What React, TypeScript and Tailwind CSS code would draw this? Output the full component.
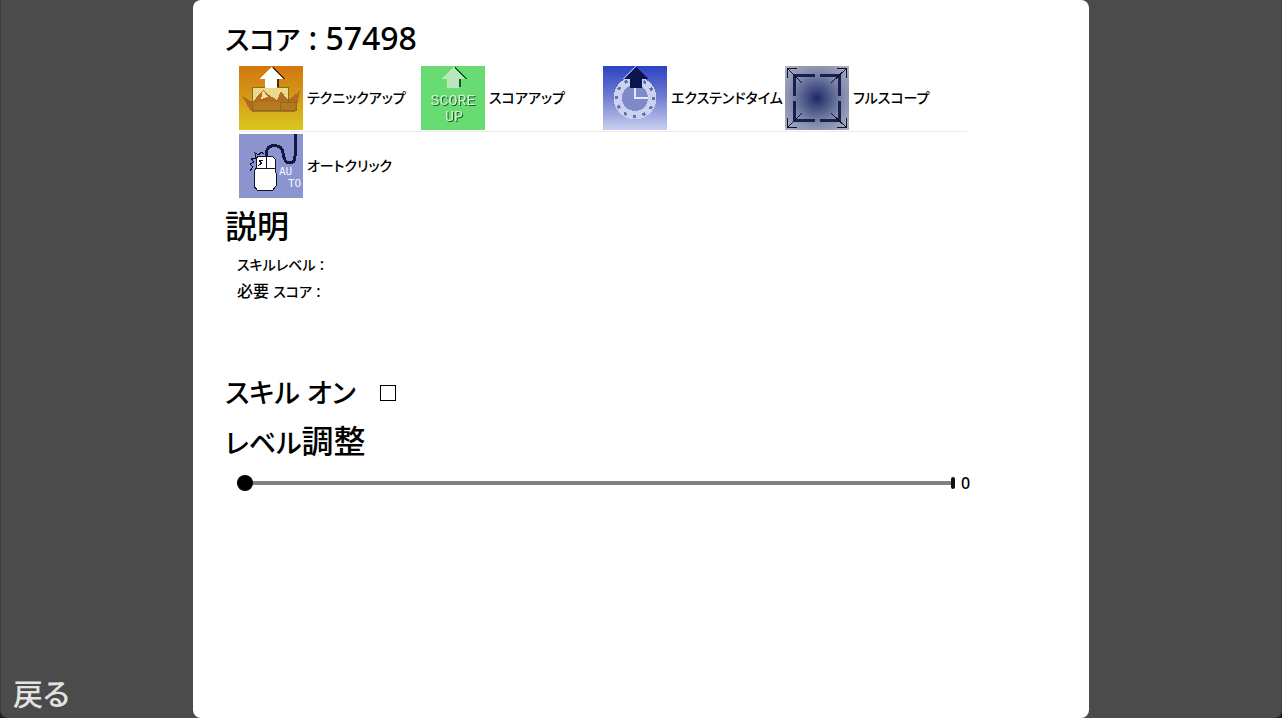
import { useState } from "react"
import type { ReactNode } from "react"

const Icon = ({ children }: { children: ReactNode }) => (
  <svg viewBox="0 0 64 64" className="h-16 w-16 shrink-0" shapeRendering="crispEdges" aria-hidden="true">
    {children}
  </svg>
)

const TechniqueIcon = () => (
  <Icon>
    <defs>
      <linearGradient id="technique" x1="0" y1="0" x2="0" y2="1">
        <stop offset="0" stopColor="#d2770f" />
        <stop offset="0.5" stopColor="#d69a18" />
        <stop offset="1" stopColor="#d8c820" />
      </linearGradient>
    </defs>
    <rect width="64" height="64" fill="url(#technique)" />
    <rect x="13" y="21" width="36" height="14" fill="#ecd98e" />
    <path d="M3 30 L14 36 L20 28 L24 24 L30 29 L38 34 L42 25 L49 34 L61 25 L57 45 L55 46 H13 L11 44 Z" fill="#b26c20" />
    <path d="M24 24 L29 31 L22 33 Z" fill="#f4dea0" />
    <rect x="14" y="36" width="42" height="9" fill="#b5791f" />
    <path d="M13.500 21.500 H49.500 V36.500 H57.500 V44.500 H13.500 Z M41.500 44 V36.500 H49" fill="none" stroke="#83701a" />
    <path d="M34 1 L46 13 H40 V21 H38 V13 Z" fill="#4a2a08" />
    <path d="M32 1 L44 13 H38 V22 H26 V13 H20 Z" fill="#ffffff" />
  </Icon>
)

const ScoreIcon = () => (
  <Icon>
    <rect width="64" height="64" fill="#68dc72" />
    <path d="M34 1 L46 13 H40 V21 H38 V13 Z" fill="#17552a" />
    <path d="M32 1 L44 13 H38 V22 H26 V13 H20 Z" fill="#b9e8bd" />
    <g
      className="drop-shadow-[1px_1px_0_#1d5c2c]"
      fontFamily="'Liberation Mono', monospace"
      fontSize="15"
      fill="#d3f7cf"
      textAnchor="middle"
    >
      <text x="32" y="39">SCORE</text>
      <text x="33" y="55">UP</text>
    </g>
  </Icon>
)

const hours = [0, 1, 2, 3, 4, 5, 6, 7, 8, 9, 10, 11]

const TimeIcon = () => (
  <Icon>
    <defs>
      <linearGradient id="time" x1="0" y1="0" x2="0" y2="1">
        <stop offset="0" stopColor="#2c42c2" />
        <stop offset="0.5" stopColor="#7380cf" />
        <stop offset="1" stopColor="#c9cff0" />
      </linearGradient>
    </defs>
    <rect width="64" height="64" fill="url(#time)" />
    <circle cx="32" cy="32" r="17" fill="none" stroke="#cbd2f0" strokeWidth="9" />
    <circle cx="32" cy="32" r="13" fill="#7f8ac8" />
    {hours.map((hour) => (
      <rect key={hour} x="31" y="12" width="3" height="3" fill="#6871ac" transform={`rotate(${hour * 30} 32 32)`} />
    ))}
    <path d="M32 21 V32 H45" fill="none" stroke="#e5e9fa" strokeWidth="2" />
    <path d="M20 13 L33 0" stroke="#b4c4f4" />
    <path d="M33 1 L45 13 H39 V22 H27 V13 H21 Z" fill="#0c1450" />
  </Icon>
)

const ScopeIcon = () => (
  <Icon>
    <defs>
      <radialGradient id="scope" cx="0.5" cy="0.5" r="0.68">
        <stop offset="0" stopColor="#1e2a63" />
        <stop offset="0.3" stopColor="#505b8c" />
        <stop offset="0.6" stopColor="#838aab" />
        <stop offset="1" stopColor="#adb0c2" />
      </radialGradient>
    </defs>
    <rect width="64" height="64" fill="url(#scope)" />
    <path d="M30 9.500 H9.500 V30 M35 9.500 H54.500 V30 M9.500 35 V54.500 H30 M54.500 35 V54.500 H35" fill="none" stroke="#17214f" strokeWidth="3" />
    <path
      d="M2.500 12 V2.500 H12 M2.500 2.500 L17 17 M52 2.500 H61.500 V12 M61.500 2.500 L46 17 M2.500 52 V61.500 H12 M2.500 61.500 L17 47 M52 61.500 H61.500 V52 M61.500 61.500 L46 47"
      fill="none"
      stroke="#0d1230"
    />
  </Icon>
)

const AutoIcon = () => (
  <Icon>
    <rect width="64" height="64" fill="#8c95cf" />
    <path d="M27.500 23 V18 Q28 11.500 36 11.500 Q43 12 44 19 Q45 29 51 29 Q56 29 56 22 V0" fill="none" stroke="#101844" strokeWidth="3" />
    <path d="M11 37 L14 33 L11 30 L15 28 L12 24 L17 24 L16 19 L20 21 L22 18 L25 20" fill="none" stroke="#0c1028" />
    <path d="M17 24 L20 22 H33 L36 25 V36 L37 39 V52 L34 56 H18 L15 52 V38 L17 34 Z" fill="#ffffff" stroke="#10142c" />
    <path d="M17 34.500 H36 M27.500 22 V34" fill="none" stroke="#10142c" />
    <path d="M24 26 L20 27 L23 29 L19 32" fill="none" stroke="#10142c" />
    <g fontFamily="'DejaVu Sans Mono', monospace" fontSize="11" fill="#f4f5ff">
      <text x="40" y="41">AU</text>
      <text x="49" y="53">TO</text>
    </g>
  </Icon>
)

const skills = [
  { name: "テクニックアップ", icon: <TechniqueIcon /> },
  { name: "スコアアップ", icon: <ScoreIcon /> },
  { name: "エクステンドタイム", icon: <TimeIcon /> },
  { name: "フルスコープ", icon: <ScopeIcon /> },
  { name: "オートクリック", icon: <AutoIcon /> },
]

const App = () => {
  const [enabled, setEnabled] = useState(false)
  const [level, setLevel] = useState(0)

  return (
    <div className="bg-[#222222] font-['Noto_Sans','Noto_Sans_CJK_JP',sans-serif] font-medium text-black [font-feature-settings:'palt']">
      <div className="flex min-h-screen items-stretch rounded-b-lg border-x border-[#404040] bg-[#4b4b4b]">
        <div className="flex flex-1 items-end px-3">
          <button type="button" className="whitespace-nowrap text-[30px] leading-12 text-[#e2e2e2]">
            戻る
          </button>
        </div>

        <main className="w-full max-w-4xl rounded-lg bg-white px-8 pt-3.5">
          <h1 className="text-[32px] leading-12">
            <span className="text-[27px] leading-none">スコア</span> : 57498
          </h1>

          {/* Skill list */}
          <ul className="ml-3.5 mt-1 grid max-w-[728px] grid-cols-4">
            {skills.map((skill, i) => (
              <li key={skill.name} className={i < 4 ? "border-b border-[#ececec] pb-px" : "pt-0.5"}>
                <button type="button" className="flex items-center gap-1 whitespace-nowrap text-sm">
                  {skill.icon}
                  {skill.name}
                </button>
              </li>
            ))}
          </ul>

          {/* Description */}
          <h2 className="mt-1 text-[32px] leading-12">説明</h2>
          <div className="ml-3 min-h-[119px] pt-px text-base leading-[27px]">
            <p>
              <span className="text-sm leading-none">スキルレベル</span> :
            </p>
            <p>
              必要 <span className="text-sm leading-none">スコア</span> :
            </p>
          </div>

          <div className="flex items-center gap-6">
            <label htmlFor="skill-on" className="text-[27px] leading-12">
              スキル オン
            </label>
            <input
              id="skill-on"
              type="checkbox"
              checked={enabled}
              onChange={(e) => setEnabled(e.target.checked)}
              className="h-4 w-4 appearance-none border border-black bg-white checked:bg-black"
            />
          </div>

          {/* Level */}
          <label htmlFor="level" className="block text-[32px] leading-12">
            <span className="text-[27px] leading-none">レベル</span>調整
          </label>
          <div className="ml-3 mt-1.5 flex max-w-[736px] items-center">
            <input
              id="level"
              type="range"
              min={0}
              max={10}
              value={level}
              onChange={(e) => setLevel(Number(e.target.value))}
              className="h-4 min-w-0 flex-1 appearance-none bg-transparent [&::-webkit-slider-runnable-track]:h-1 [&::-webkit-slider-runnable-track]:bg-[#808080] [&::-webkit-slider-thumb]:-mt-1.5 [&::-webkit-slider-thumb]:h-4 [&::-webkit-slider-thumb]:w-4 [&::-webkit-slider-thumb]:appearance-none [&::-webkit-slider-thumb]:rounded-full [&::-webkit-slider-thumb]:bg-black"
            />
            <span className="h-3 w-1 rounded-xs bg-[#111111]" />
            <output htmlFor="level" className="ml-1.5 w-3 text-base">
              {level}
            </output>
          </div>
        </main>

        <div className="flex-1 px-3" />
      </div>
    </div>
  )
}

export default App
